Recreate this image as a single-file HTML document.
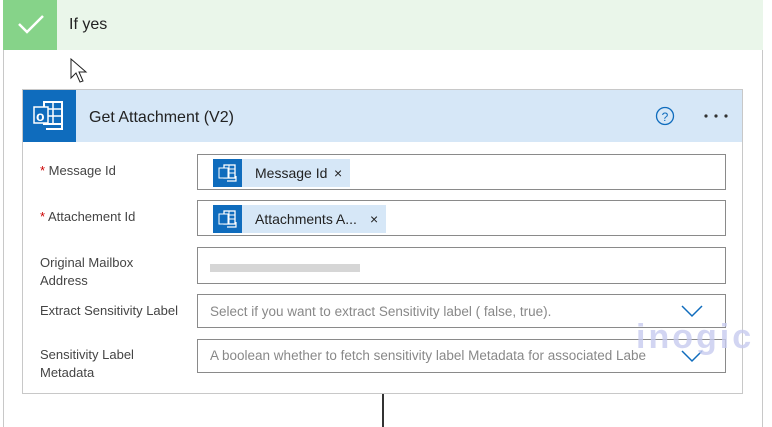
<!DOCTYPE html>
<html><head><style>
*{margin:0;padding:0;box-sizing:border-box}
body{width:772px;height:427px;background:#fff;font-family:"Liberation Sans",sans-serif;position:relative;overflow:hidden;color:#333}
.abs{position:absolute}
.lbl{position:absolute;left:40px;font-size:13px;color:#444;line-height:18px}
.inp{position:absolute;left:197px;width:529px;border:1px solid #8a8a8a;background:#fff}
.tok{position:absolute;top:4px;left:15px;height:28px;background:#d6e7f7;font-size:14px;line-height:28px;color:#222}
.tok .ic{position:absolute;left:0;top:0;width:29px;height:28px;background:#0f6cbd}
.ph{position:absolute;left:12px;font-size:13.5px;color:#888}
.chev{position:absolute;right:22px}
</style></head><body>
<div class="abs" style="left:3px;top:0;width:760px;height:50px;background:#eaf6ea"></div>
<div class="abs" style="left:3px;top:0;width:54px;height:50px;background:#86d389"></div>
<svg class="abs" style="left:17px;top:13px" width="28" height="22"><path d="M2 11 L10 19 L26 3" stroke="#fff" stroke-width="2.5" fill="none"/></svg>
<div class="abs" style="left:69px;top:16px;font-size:16px;color:#222">If yes</div>
<div class="abs" style="left:3px;top:50px;width:1px;height:377px;background:#c8c8c8"></div>
<div class="abs" style="left:762px;top:50px;width:1px;height:377px;background:#c8c8c8"></div>
<svg class="abs" style="left:70px;top:58px" width="20" height="28"><path d="M1 1 L1 20 L6 15 L10 24 L13 23 L9 14 L16 14 Z" fill="#fff" stroke="#222" stroke-width="1"/></svg>
<div class="abs" style="left:22px;top:89px;width:721px;height:305px;border:1px solid #c8c8c8;background:#fff"></div>
<div class="abs" style="left:23px;top:90px;width:719px;height:52px;background:#d6e7f7"></div>
<div class="abs" style="left:23px;top:90px;width:53px;height:52px;background:#0f6cbd"></div>
<svg class="abs" style="left:32px;top:99px" width="34" height="34"><rect x="12" y="3" width="18" height="22" fill="none" stroke="#fff" stroke-width="2"/><path d="M12 10h18M12 17h18M21 3v22" stroke="#fff" stroke-width="1.5"/><rect x="2" y="8" width="14" height="16" fill="#0f6cbd" stroke="#fff" stroke-width="1.5"/><text x="4" y="22" font-size="14" fill="#fff" font-family="Liberation Sans" font-weight="bold">o</text><path d="M14 30 L30 30 L30 20" fill="none" stroke="#fff" stroke-width="2"/></svg>
<div class="abs" style="left:89px;top:109px;font-size:16px;color:#222">Get Attachment (V2)</div>
<svg class="abs" style="left:655px;top:106px" width="20" height="20"><circle cx="10" cy="10" r="8.5" stroke="#0f6cbd" stroke-width="1.3" fill="none"/><text x="10" y="15" text-anchor="middle" font-size="12" fill="#0f6cbd" font-family="Liberation Sans">?</text></svg>
<svg class="abs" style="left:703px;top:113px" width="26" height="6"><circle cx="3" cy="3" r="1.6" fill="#333"/><circle cx="13" cy="3" r="1.6" fill="#333"/><circle cx="23" cy="3" r="1.6" fill="#333"/></svg>

<div class="lbl" style="top:162px"><span style="color:#c00">*</span> Message Id</div>
<div class="inp" style="top:154px;height:36px"><div class="tok" style="width:137px"><div class="ic"><svg width="29" height="28"><rect x="11" y="6" width="11" height="13" fill="none" stroke="#fff" stroke-width="1.3"/><path d="M11 10h11M11 14h11M16 6v13" stroke="#fff" stroke-width="1"/><rect x="6" y="9" width="9" height="10" fill="#0f6cbd" stroke="#fff" stroke-width="1"/><path d="M14 22h9v-5" stroke="#fff" stroke-width="1.2" fill="none"/></svg></div><span style="position:absolute;left:42px">Message Id</span><span style="position:absolute;left:121px">×</span></div></div>
<div class="lbl" style="top:208px"><span style="color:#c00">*</span> Attachement Id</div>
<div class="inp" style="top:200px;height:36px"><div class="tok" style="width:173px"><div class="ic"><svg width="29" height="28"><rect x="11" y="6" width="11" height="13" fill="none" stroke="#fff" stroke-width="1.3"/><path d="M11 10h11M11 14h11M16 6v13" stroke="#fff" stroke-width="1"/><rect x="6" y="9" width="9" height="10" fill="#0f6cbd" stroke="#fff" stroke-width="1"/><path d="M14 22h9v-5" stroke="#fff" stroke-width="1.2" fill="none"/></svg></div><span style="position:absolute;left:42px">Attachments A...</span><span style="position:absolute;left:157px">×</span></div></div>
<div class="lbl" style="top:254px">Original Mailbox<br>Address</div>
<div class="inp" style="top:247px;height:37px"><div class="abs" style="left:12px;top:16px;width:150px;height:8px;background:#ccc;opacity:.8"></div></div>
<div class="lbl" style="top:302px">Extract Sensitivity Label</div>
<div class="inp" style="top:294px;height:34px"><div class="ph" style="top:9px">Select if you want to extract Sensitivity label ( false, true).</div><svg class="chev" style="top:10px" width="22" height="13"><path d="M1 1 L11 11 L21 1" stroke="#0f6cbd" stroke-width="1.5" fill="none"/></svg></div>
<div class="lbl" style="top:346px">Sensitivity Label<br>Metadata</div>
<div class="inp" style="top:339px;height:34px;overflow:hidden"><div class="ph" style="top:8px;white-space:nowrap">A boolean whether to fetch sensitivity label Metadata for associated Labe</div><svg class="chev" style="top:10px" width="22" height="13"><path d="M1 1 L11 11 L21 1" stroke="#0f6cbd" stroke-width="1.5" fill="none"/></svg></div>
<div class="abs" style="left:636px;top:318px;font-size:34px;font-weight:bold;color:#c8cbef;opacity:.8;letter-spacing:3px">inogic</div>
<div class="abs" style="left:382px;top:394px;width:2px;height:33px;background:#333"></div>
</body></html>
